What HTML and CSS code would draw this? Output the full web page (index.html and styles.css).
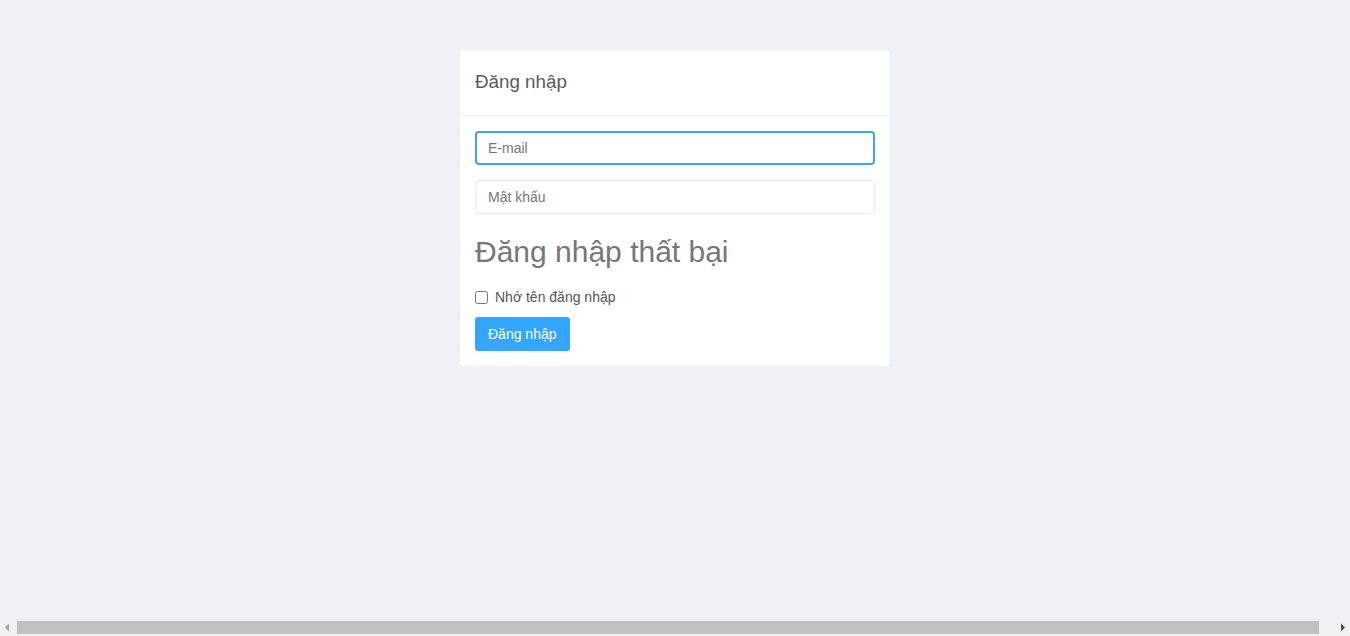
FILE: index.html
```html
<!DOCTYPE html>
<html lang="vi">
<head>
<meta charset="utf-8">
<title>Đăng nhập</title>
<link rel="stylesheet" href="styles.css">
</head>
<body>
<div class="page">
  <div class="card">
    <div class="card-header">Đăng nhập</div>
    <form class="card-body">
      <input class="field field-focus" type="text" placeholder="E-mail">
      <input class="field field-pass" type="password" placeholder="Mật khẩu">
      <h2 class="error">Đăng nhập thất bại</h2>
      <label class="remember"><input type="checkbox" class="check"> <span>Nhớ tên đăng nhập</span></label>
      <button type="button" class="btn">Đăng nhập</button>
    </form>
  </div>
</div>
<div class="hscroll" aria-hidden="true">
  <div class="hs-btn">
    <svg width="17" height="17" viewBox="0 0 17 17"><polygon points="5,8.5 9,4.5 9,12.5" fill="#a3a3a3"/></svg>
  </div>
  <div class="hs-track"><div class="hs-thumb"></div></div>
  <div class="hs-btn">
    <svg width="17" height="17" viewBox="0 0 17 17"><polygon points="12,8.5 8,4.5 8,12.5" fill="#505050"/></svg>
  </div>
</div>
</body>
</html>
```

FILE: styles.css
```css
html, body {
  margin: 0;
  padding: 0;
}
body {
  background: #eff2f5;
  font-family: "Liberation Sans", Arial, sans-serif;
  font-size: 14px;
  color: #555;
}
.page {
  padding-top: 50px;
}
.card {
  width: 430px;
  margin: 0 auto;
  background: #fff;
  border-radius: 4px;
  box-shadow: 0 1px 2px rgba(0, 0, 0, 0.06);
}
.card-header {
  padding: 20px 15px 21px;
  font-size: 18.8px;
  line-height: 24px;
  color: #5a5a5a;
  border-bottom: 1px solid #ebedf0;
}
.card-body {
  padding: 15px;
  display: flex;
  flex-direction: column;
  align-items: flex-start;
  margin: 0;
}
.field {
  width: 100%;
  box-sizing: border-box;
  height: 34px;
  font-family: inherit;
  font-size: 14px;
  color: #555;
  background: #fff;
  border-radius: 4px;
  outline: none;
}
.field::placeholder {
  color: #777;
}
.field-focus {
  border: 2px solid #3fa3f3;
  padding: 0 11px;
}
.field-pass {
  border: 1px solid #e6e8eb;
  padding: 0 12px;
  margin-top: 15px;
}
.error {
  margin: 21px 0 19px;
  font-size: 30px;
  line-height: 33px;
  font-weight: normal;
  color: #777;
}
.remember {
  display: flex;
  align-items: center;
  height: 20px;
  line-height: 20px;
  color: #555;
}
.check {
  width: 13px;
  height: 13px;
  margin: 0 7px 0 0;
}
.btn {
  margin-top: 10px;
  height: 34px;
  padding: 0 13px;
  border: none;
  border-radius: 3px;
  background: #33a6ff;
  color: #fff;
  font-family: inherit;
  font-size: 14px;
}
.hscroll {
  position: fixed;
  left: 0;
  right: 0;
  bottom: 0;
  height: 17px;
  display: flex;
  background: #f1f1f1;
}
.hs-btn {
  width: 17px;
  height: 17px;
  flex: none;
}
.hs-btn svg {
  display: block;
}
.hs-track {
  flex: 1;
  padding: 2px 14px 2px 0;
  display: flex;
}
.hs-thumb {
  flex: 1;
  background: #c1c1c1;
}
```
